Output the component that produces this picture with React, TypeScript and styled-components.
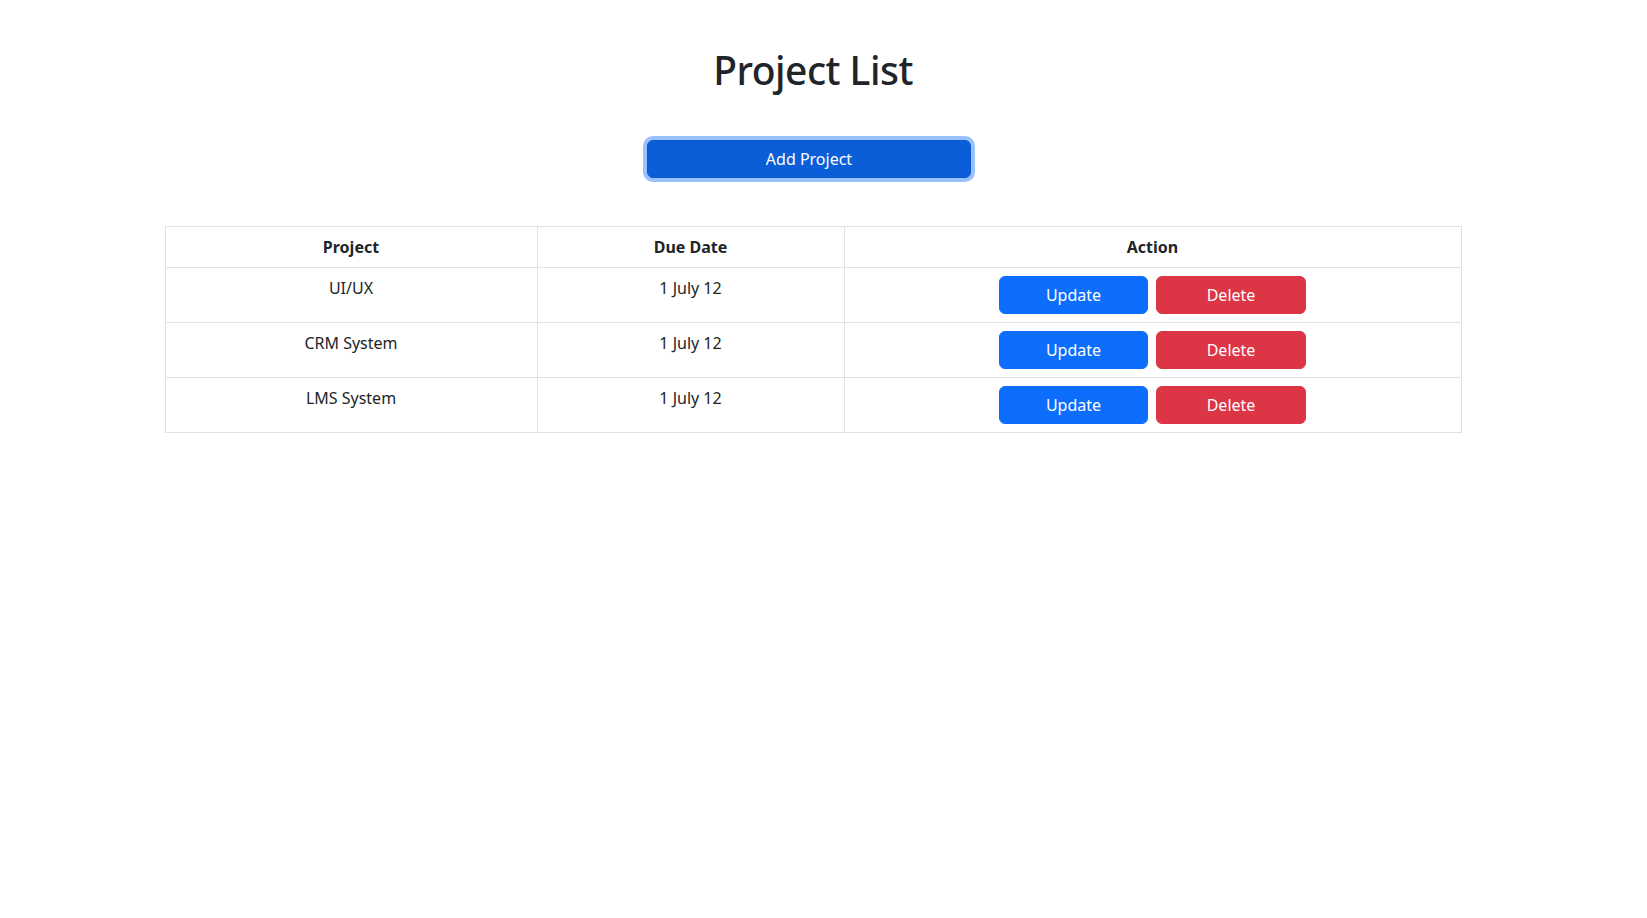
import React from "react";
import styled, { createGlobalStyle } from "styled-components";

const GlobalStyle = createGlobalStyle`
  html, body {
    margin: 0;
    padding: 0;
    background: #ffffff;
  }
  body {
    font-family: "Noto Sans", "Open Sans", sans-serif;
    font-size: 16px;
    line-height: 1.5;
    color: #212529;
  }
  * { box-sizing: border-box; }
`;

const Page = styled.div`
  width: 1296px;
  margin-left: 165px;
  padding-top: 46px;
  display: flex;
  flex-direction: column;
  align-items: center;
`;

const Title = styled.h1`
  margin: 0;
  font-size: 39px;
  letter-spacing: -0.5px;
  line-height: 48px;
  font-weight: 500;
  color: #212529;
  text-align: center;
`;

const AddRow = styled.div`
  margin-top: 46px;
  display: flex;
  justify-content: center;
  width: 100%;
  padding-right: 8px;
`;

const AddButton = styled.button`
  width: 324px;
  height: 38px;
  border: 1px solid #0a58ca;
  border-radius: 6px;
  background: #0b5ed7;
  color: #ffffff;
  font-family: inherit;
  font-size: 16px;
  line-height: 24px;
  box-shadow: 0 0 0 4px rgba(49, 132, 253, 0.5);
  cursor: pointer;
`;

const Table = styled.table`
  margin-top: 48px;
  width: 1296px;
  border-collapse: collapse;
  table-layout: fixed;
  vertical-align: top;
`;

const HeadCell = styled.th`
  border: 1px solid #dee2e6;
  padding: 8px;
  font-weight: 700;
  text-align: center;
  line-height: 24px;
  color: #212529;
`;

const Cell = styled.td`
  border: 1px solid #dee2e6;
  padding: 8px;
  text-align: center;
  vertical-align: top;
  line-height: 24px;
  color: #212529;
`;

const Actions = styled.div`
  display: flex;
  justify-content: center;
  gap: 8px;
`;

const ActionButton = styled.button<{ $variant: "primary" | "danger" }>`
  width: ${(p) => (p.$variant === "primary" ? "149px" : "150px")};
  height: 38px;
  border: 1px solid ${(p) => (p.$variant === "primary" ? "#0d6efd" : "#dc3545")};
  border-radius: 6px;
  background: ${(p) => (p.$variant === "primary" ? "#0d6efd" : "#dc3545")};
  color: #ffffff;
  font-family: inherit;
  font-size: 16px;
  line-height: 24px;
  padding: 6px 12px;
  cursor: pointer;
`;

const projects = [
  { name: "UI/UX", due: "1 July 12" },
  { name: "CRM System", due: "1 July 12" },
  { name: "LMS System", due: "1 July 12" },
];

export default function App() {
  return (
    <>
      <GlobalStyle />
      <Page>
        <Title>Project List</Title>
        <AddRow>
          <AddButton>Add Project</AddButton>
        </AddRow>
        <Table>
          <colgroup>
            <col style={{ width: 372 }} />
            <col style={{ width: 307 }} />
            <col style={{ width: 617 }} />
          </colgroup>
          <thead>
            <tr>
              <HeadCell>Project</HeadCell>
              <HeadCell>Due Date</HeadCell>
              <HeadCell>Action</HeadCell>
            </tr>
          </thead>
          <tbody>
            {projects.map((p) => (
              <tr key={p.name}>
                <Cell>{p.name}</Cell>
                <Cell>{p.due}</Cell>
                <Cell>
                  <Actions>
                    <ActionButton $variant="primary">Update</ActionButton>
                    <ActionButton $variant="danger">Delete</ActionButton>
                  </Actions>
                </Cell>
              </tr>
            ))}
          </tbody>
        </Table>
      </Page>
    </>
  );
}
